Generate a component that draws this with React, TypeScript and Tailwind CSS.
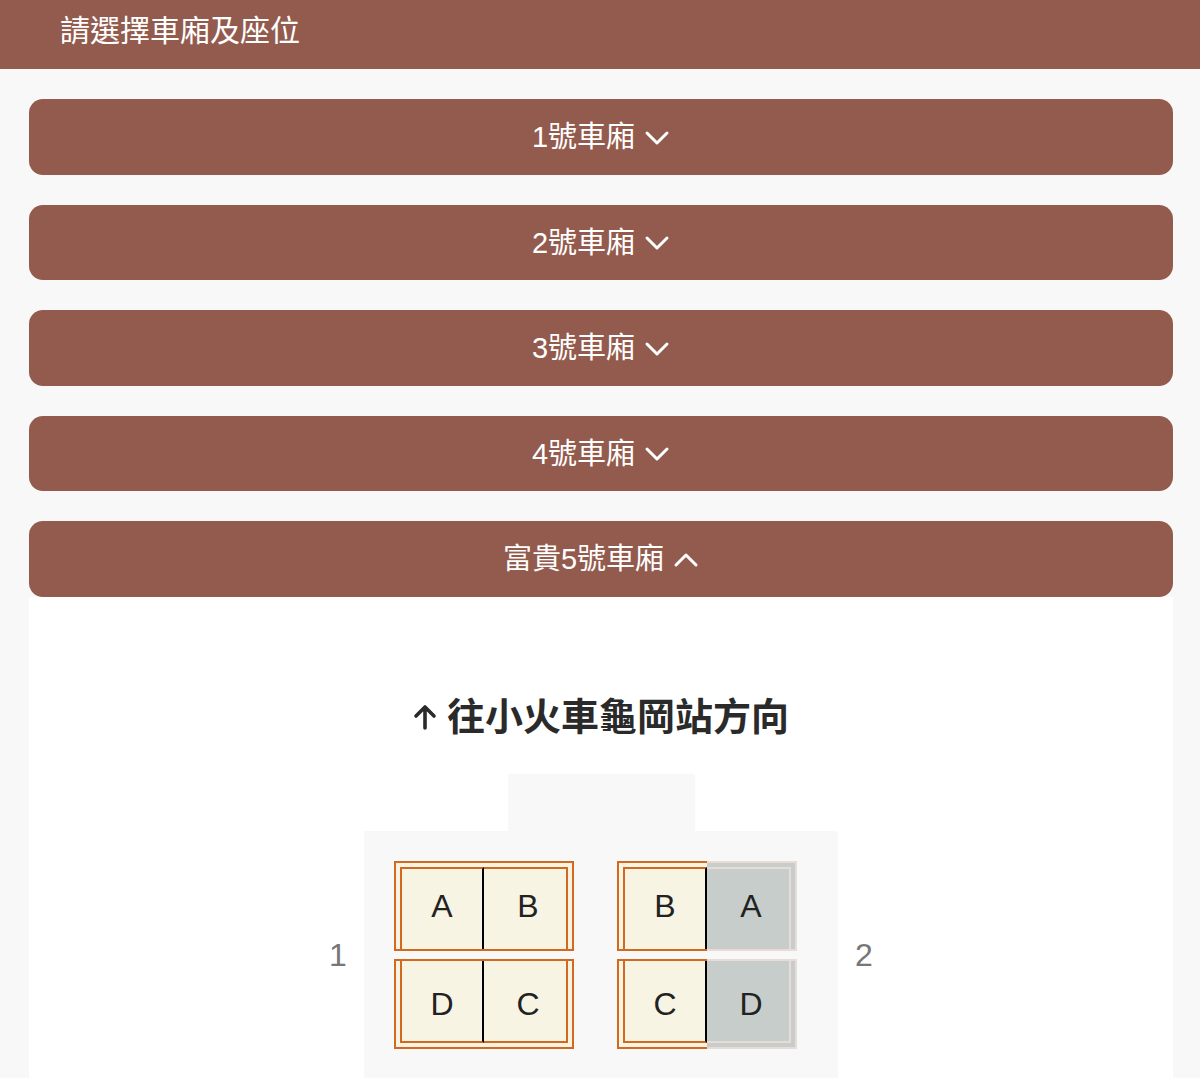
import { useState } from "react";

const FONT = { fontFamily: '"Liberation Sans", "Noto Sans CJK TC", sans-serif' };

type SeatProps = {
  letter: string;
  side: "left" | "right";
  back: "top" | "bottom";
  taken?: boolean;
};

function Chevron({ up }: { up?: boolean }) {
  return (
    <svg width="26" height="16" viewBox="0 0 26 16" fill="none" className="shrink-0">
      <polyline
        points={up ? "3,13 13,3 23,13" : "3,3 13,13 23,3"}
        stroke="white"
        strokeWidth="3"
        strokeLinecap="round"
        strokeLinejoin="round"
      />
    </svg>
  );
}

function ArrowUp() {
  return (
    <svg width="24" height="26" viewBox="0 0 24 26" fill="none" className="shrink-0">
      <path d="M12 24V3M3 12l9-9 9 9" stroke="#2a2a2a" strokeWidth="3.6" strokeLinecap="round" strokeLinejoin="round" />
    </svg>
  );
}

// a seat: double line on the back side and the armrest side, black line between the pair
function Seat({ letter, side, back, taken }: SeatProps) {
  const outer = [
    "flex w-[90px] h-[90px] border-t-2 border-b-2",
    taken ? "bg-[#c6cdca] border-[#e9dbd6]" : "bg-[#f8f4e4] border-[#d2691e]",
    side === "left" ? "border-l-2 pl-[4px]" : "border-r-2 pr-[4px]",
    back === "top" ? "pt-[4px]" : "pb-[4px]",
  ].join(" ");
  const inner = [
    "flex flex-1 items-center justify-center text-[32px] text-[#222]",
    taken ? "border-[#e9dbd6]" : "border-[#d2691e]",
    side === "left" ? "border-l-2 border-r-2 border-r-black" : "border-r-2 pl-[6px]",
    back === "top" ? "border-t-2 pb-[6px]" : "border-b-2 pt-[6px]",
  ].join(" ");
  return (
    <div className={outer}>
      <div className={inner}>{letter}</div>
    </div>
  );
}

function SeatMap() {
  return (
    <div className="flex flex-col items-center">
      <div className="w-[187px] h-[57px] bg-[#f8f8f8]" />
      <div className="flex items-start justify-center">
        <div className="w-[52px] mt-[104px] text-center text-[32px] leading-[40px] text-[#777]">1</div>
        <div className="w-[474px] bg-[#f8f8f8] pt-[30px] pb-[60px] pl-[30px] flex gap-[43px]">
          <div className="flex flex-col gap-[8px]">
            <div className="flex">
              <Seat letter="A" side="left" back="top" />
              <Seat letter="B" side="right" back="top" />
            </div>
            <div className="flex">
              <Seat letter="D" side="left" back="bottom" />
              <Seat letter="C" side="right" back="bottom" />
            </div>
          </div>
          <div className="flex flex-col gap-[8px]">
            <div className="flex">
              <Seat letter="B" side="left" back="top" />
              <Seat letter="A" side="right" back="top" taken />
            </div>
            <div className="flex">
              <Seat letter="C" side="left" back="bottom" />
              <Seat letter="D" side="right" back="bottom" taken />
            </div>
          </div>
        </div>
        <div className="w-[52px] mt-[104px] text-center text-[32px] leading-[40px] text-[#777]">2</div>
      </div>
    </div>
  );
}

const CARS = ["1號車廂", "2號車廂", "3號車廂", "4號車廂", "富貴5號車廂"];

export default function App() {
  const [open, setOpen] = useState(4);

  return (
    <div className="min-h-screen bg-[#f8f8f8]" style={FONT}>
      <header className="h-[69px] bg-[#935b4d] pl-[60px] pt-[11px]">
        <h1 className="text-[30px] leading-[40px] text-white">請選擇車廂及座位</h1>
      </header>

      <div className="flex flex-col gap-[30px] pt-[30px] pl-[29px] pr-[27px]">
        {CARS.map((name, i) => (
          <div key={name}>
            <button
              onClick={() => setOpen(open === i ? -1 : i)}
              className="flex w-full h-[75.5px] items-center justify-center gap-[9px] rounded-[14px] bg-[#935b4d] pt-[2px] text-[29px] text-white"
            >
              <span>{name}</span>
              <Chevron up={open === i} />
            </button>
            {open === i && (
              <div className="bg-white pt-[93px]">
                <h2 className="mb-[30px] flex items-center justify-center gap-[10px] text-[38px] leading-[54px] font-bold text-[#2a2a2a]">
                  <ArrowUp />
                  <span>往小火車龜岡站方向</span>
                </h2>
                <SeatMap />
              </div>
            )}
          </div>
        ))}
      </div>
    </div>
  );
}
